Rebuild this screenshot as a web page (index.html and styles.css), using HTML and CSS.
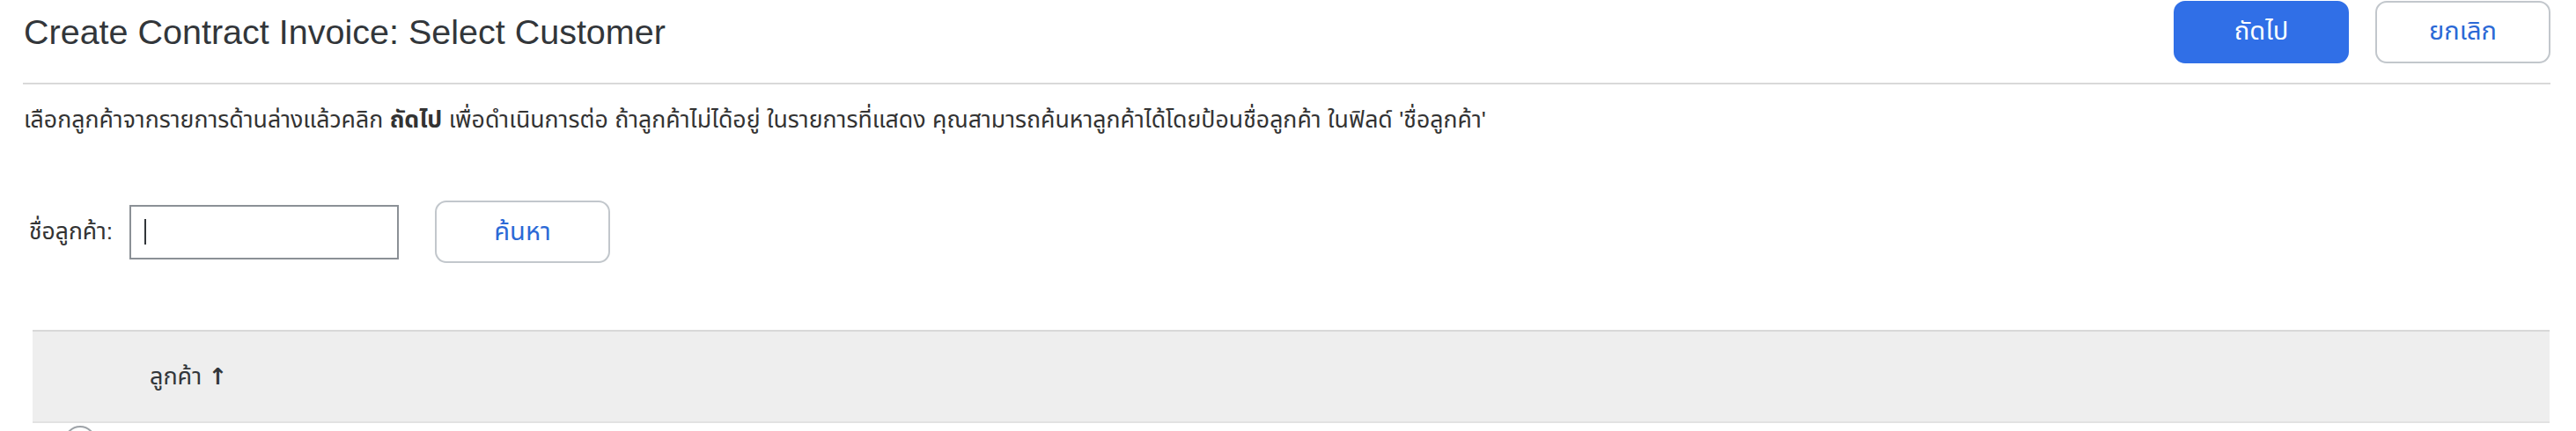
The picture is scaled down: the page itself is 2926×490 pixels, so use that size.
FILE: index.html
```html
<!DOCTYPE html>
<html lang="th">
<head>
  <meta charset="UTF-8" />
  <meta name="viewport" content="width=device-width, initial-scale=1.0" />
  <title>Create Contract Invoice: Select Customer</title>
  <link rel="stylesheet" href="styles.css">
</head>
<body>
  <!-- Page header -->
  <div class="page-header">
    <h1>Create Contract Invoice: Select Customer</h1>
    <div class="actions">
      <button class="btn btn-primary">ถัดไป</button>
      <button class="btn">ยกเลิก</button>
    </div>
  </div>
  <div class="divider"></div>

  <p class="hint">เลือกลูกค้าจากรายการด้านล่างแล้วคลิก <b>ถัดไป</b> เพื่อดำเนินการต่อ ถ้าลูกค้าไม่ได้อยู่ ในรายการที่แสดง คุณสามารถค้นหาลูกค้าได้โดยป้อนชื่อลูกค้า ในฟิลด์ 'ชื่อลูกค้า'</p>

  <!-- Search -->
  <div class="search-row">
    <label class="search-label" for="customer">ชื่อลูกค้า:</label>
    <div class="search-input">
      <span class="caret"></span>
    </div>
    <button class="btn">ค้นหา</button>
  </div>

  <!-- Customer table -->
  <div class="table">
    <div class="table-head">
      <span class="col-title">ลูกค้า <span class="sort">↑</span></span>
    </div>
    <div class="table-row">
      <span class="radio"></span>
    </div>
  </div>
</body>
</html>
```

FILE: styles.css
```css
* {
  margin: 0;
  padding: 0;
  box-sizing: border-box;
}

body {
  background: #fff;
  color: #32363a;
  font-family: 'Liberation Sans', 'Noto Sans Thai', 'Noto Sans', sans-serif;
  overflow: hidden;
}

/* Header */
.page-header {
  display: flex;
  align-items: center;
  justify-content: space-between;
  height: 72px;
  padding: 0 29px 0 27px;
}

h1 {
  font-size: 39.5px;
  font-weight: normal;
  color: #32363a;
}

.actions {
  display: flex;
  gap: 30px;
}

.btn {
  width: 199px;
  height: 71px;
  border: 2px solid #c2c7cc;
  border-radius: 13px;
  background: #fff;
  color: #2b69d6;
  font-family: inherit;
  font-size: 29px;
}

.btn-primary {
  background: #306fe7;
  border-color: #306fe7;
  color: #fff;
}

.divider {
  margin: 22px 29px 0 26px;
  border-top: 2px solid #d9d9d9;
}

.hint {
  margin: 24px 0 0 27px;
  font-size: 26.7px;
  line-height: 32px;
  color: #333;
}

.hint b {
  font-weight: bold;
}

/* Search */
.search-row {
  display: flex;
  align-items: center;
  margin: 76px 0 0 33px;
}

.search-label {
  width: 114px;
  font-size: 26.5px;
  color: #333;
}

.search-input {
  display: flex;
  align-items: center;
  width: 306px;
  height: 62px;
  border: 2px solid #8b9096;
  padding-left: 15px;
  margin-right: 41px;
}

.caret {
  width: 2px;
  height: 29px;
  background: #32363a;
}

/* Table */
.table {
  margin: 76px 30px 0 37px;
}

.table-head {
  display: flex;
  align-items: center;
  height: 106px;
  background: #eee;
  border-top: 2px solid #d8d8d8;
  border-bottom: 2px solid #e2e2e2;
  padding-left: 133px;
}

.col-title {
  font-size: 27px;
  color: #32363a;
}

.sort {
  font-family: 'DejaVu Sans', sans-serif;
  font-size: 26px;
  font-weight: bold;
}

.table-row {
  height: 9px;
  overflow: hidden;
  padding: 3px 0 0 36px;
}

.radio {
  display: block;
  width: 36px;
  height: 36px;
  border: 2px solid #9ea3a8;
  border-radius: 50%;
}
```
